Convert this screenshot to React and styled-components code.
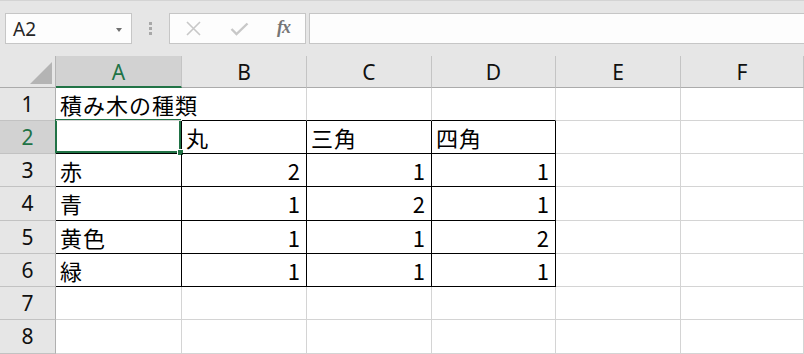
import React from 'react'
import styled, { createGlobalStyle } from 'styled-components'

const GlobalStyle = createGlobalStyle`
  html, body {
    margin: 0;
    padding: 0;
    overflow: hidden;
    background: #e6e6e6;
  }
`

const Window = styled.div`
  width: 804px;
  height: 354px;
  overflow: hidden;
  background: #e6e6e6;
`

const Toolbar = styled.div`
  height: 56px;
  box-sizing: border-box;
  border-top: 1px solid #d4d4d4;
  padding: 12px 0 0 5px;
  display: flex;
  align-items: flex-start;
`

const NameBox = styled.div`
  width: 127px;
  height: 31px;
  box-sizing: border-box;
  border: 1px solid #c6c6c6;
  background: #fdfdfd;
  display: flex;
  align-items: center;
  justify-content: space-between;
  padding: 0 9px 0 7px;
  font-family: "Noto Sans", sans-serif;
  font-size: 19px;
  color: #262626;
`

const Caret = styled.span`
  width: 0;
  height: 0;
  border-left: 3.5px solid transparent;
  border-right: 3.5px solid transparent;
  border-top: 4px solid #707070;
  margin-top: 2px;
`

const Grip = styled.div`
  width: 37px;
  height: 31px;
  display: flex;
  flex-direction: column;
  align-items: center;
  justify-content: center;
  gap: 2px;
`

const GripDot = styled.span`
  width: 3px;
  height: 3px;
  background: #a8a8a8;
`

const ButtonBox = styled.div`
  width: 137px;
  height: 31px;
  box-sizing: border-box;
  border: 1px solid #c6c6c6;
  background: #fdfdfd;
  display: grid;
  grid-template-columns: 46px 46px 1fr;
  align-items: center;
  justify-items: center;
`

const Fx = styled.span`
  font-family: "Liberation Serif", serif;
  font-style: italic;
  font-weight: bold;
  font-size: 18px;
  color: #767676;
  letter-spacing: -1px;
  margin-top: -2px;
`

const FormulaInput = styled.div`
  flex: 1;
  height: 31px;
  box-sizing: border-box;
  margin-left: 3px;
  border: 1px solid #c6c6c6;
  border-right: none;
  background: #fdfdfd;
`

const Sheet = styled.div`
  display: grid;
  grid-template-columns: 56px 126px 125px 125px 124px 125px 1fr;
  grid-template-rows: 32px 33px 33px 33px 34px 33px 33px 33px 34px;
  background: #fff;
`

const Corner = styled.div`
  position: relative;
  background: #e6e6e6;
  box-sizing: border-box;
  border-right: 1px solid #b5b5b5;
  border-bottom: 1px solid #ababab;

  &::after {
    content: '';
    position: absolute;
    right: 3px;
    bottom: 3px;
    width: 22px;
    height: 22px;
    background: #b4b4b4;
    clip-path: polygon(100% 0, 100% 100%, 0 100%);
  }
`

const ColHead = styled.div`
  box-sizing: border-box;
  background: ${p => (p.$active ? '#d2d2d2' : '#e6e6e6')};
  color: ${p => (p.$active ? '#217346' : '#111')};
  border-right: 1px solid #c4c4c4;
  border-bottom: ${p => (p.$active ? '2px solid #217346' : '1px solid #ababab')};
  font-family: "Noto Sans", sans-serif;
  font-size: 21px;
  line-height: 31px;
  padding-top: 1px;
  text-align: center;
`

const RowHead = styled.div`
  box-sizing: border-box;
  background: ${p => (p.$active ? '#d2d2d2' : '#e6e6e6')};
  color: ${p => (p.$active ? '#217346' : '#111')};
  border-right: 1px solid ${p => (p.$active ? '#217346' : '#b0b0b0')};
  border-bottom: 1px solid #c2c2c2;
  font-family: "Noto Sans", sans-serif;
  font-size: 21px;
  line-height: 32px;
  text-align: center;
`

const edgeColor = (p, side) => {
  if (p.$edge && p.$edge.includes(side)) return '#000'
  if (side === 'r' && p.$spill) return 'transparent'
  return '#d4d4d4'
}

const Cell = styled.div`
  position: relative;
  box-sizing: border-box;
  border-right: 1px solid ${p => edgeColor(p, 'r')};
  border-bottom: 1px solid ${p => edgeColor(p, 'b')};
  padding: 0 5px 0 4px;
  font-family: "Noto Sans CJK JP", "Noto Sans", sans-serif;
  font-size: 22px;
  letter-spacing: 1px;
  line-height: 32px;
  color: #000;
  white-space: nowrap;
  text-align: ${p => (p.$num ? 'right' : 'left')};
  overflow: visible;
  z-index: ${p => (p.$spill ? 1 : 0)};
`

const Selection = styled.div`
  position: absolute;
  top: -2px;
  left: -1px;
  right: 0;
  bottom: 0;
  border: 2px solid #217346;
  pointer-events: none;
  z-index: 2;
`

const Handle = styled.span`
  position: absolute;
  right: -4px;
  bottom: -4px;
  width: 5px;
  height: 5px;
  background: #217346;
  border-left: 1px solid #fff;
  border-top: 1px solid #fff;
`

const columns = ['A', 'B', 'C', 'D', 'E', 'F']

const data = [
  ['積み木の種類', '', '', ''],
  ['', '丸', '三角', '四角'],
  ['赤', 2, 1, 1],
  ['青', 1, 2, 1],
  ['黄色', 1, 1, 2],
  ['緑', 1, 1, 1],
  [],
  [],
]

// black borders of the table range A2:D6 plus the top of B2:D2
const edgeFor = (r, c) => {
  if (c > 3) return undefined
  if (r === 0) return c > 0 ? 'b' : undefined
  if (r <= 5) return 'rb'
  return undefined
}

const CrossIcon = () => (
  <svg width="17" height="15" viewBox="0 0 17 15">
    <path d="M2 1 L15 14 M15 1 L2 14" stroke="#c8c8c8" strokeWidth="1.6" fill="none" />
  </svg>
)

const CheckIcon = () => (
  <svg width="19" height="14" viewBox="0 0 19 14">
    <path d="M1.5 7 L6.5 12 L17.5 1.5" stroke="#c8c8c8" strokeWidth="2.4" fill="none" />
  </svg>
)

const App = () => {
  return (
    <Window>
      <GlobalStyle />
      <Toolbar>
        <NameBox>
          A2
          <Caret />
        </NameBox>
        <Grip>
          <GripDot />
          <GripDot />
          <GripDot />
        </Grip>
        <ButtonBox>
          <CrossIcon />
          <CheckIcon />
          <Fx>fx</Fx>
        </ButtonBox>
        <FormulaInput />
      </Toolbar>
      <Sheet>
        <Corner />
        {columns.map(col => (
          <ColHead key={col} $active={col === 'A'}>{col}</ColHead>
        ))}
        {data.map((row, r) => (
          <React.Fragment key={r}>
            <RowHead $active={r === 1}>{r + 1}</RowHead>
            {columns.map((col, c) => {
              const value = row[c]
              const isNum = typeof value === 'number'
              return (
                <Cell
                  key={col}
                  $num={isNum}
                  $edge={edgeFor(r, c)}
                  $spill={r === 0 && c === 0}
                >
                  {value}
                  {r === 1 && c === 0 && (
                    <Selection>
                      <Handle />
                    </Selection>
                  )}
                </Cell>
              )
            })}
          </React.Fragment>
        ))}
      </Sheet>
    </Window>
  )
}

export default App
